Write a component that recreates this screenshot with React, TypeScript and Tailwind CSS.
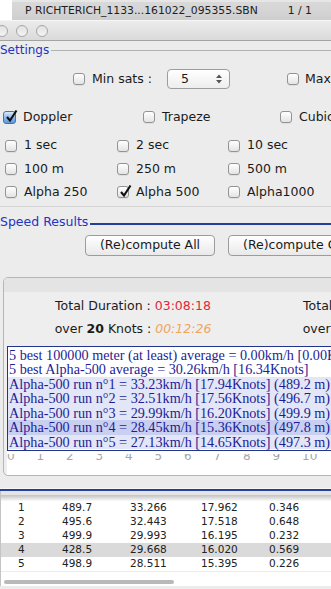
import React from "react";

const SANS = { fontFamily: '"DejaVu Sans", Verdana, sans-serif' };
const SERIF = { fontFamily: '"Liberation Serif", "Times New Roman", serif' };

function Box({ checked, blue }: { checked?: boolean; blue?: boolean }) {
  return (
    <span
      className={
        blue
          ? "relative inline-block w-[13px] h-[13px] shrink-0 rounded-[3px] border border-[#4d71a6] bg-gradient-to-b from-[#dbe9f9] via-[#8cb8ec] to-[#5d98dd]"
          : "relative inline-block w-[12px] h-[12px] shrink-0 rounded-[3px] border border-[#939393] bg-gradient-to-b from-white to-[#e4e4e4] shadow-[0_1px_0_rgba(0,0,0,0.06)]"
      }
    >
      {checked && (
        <svg className="absolute left-[1px] top-[-3px]" width="13" height="14" viewBox="0 0 13 14">
          <path d="M2 8 L5 11.5 L11.5 1.5" fill="none" stroke="#111" strokeWidth="2.1" />
        </svg>
      )}
    </span>
  );
}

function Check({ label, checked, blue, w }: { label: string; checked?: boolean; blue?: boolean; w: string }) {
  return (
    <div className={`flex items-center gap-[7px] shrink-0 ${w}`}>
      <Box checked={checked} blue={blue} />
      <span className="whitespace-nowrap">{label}</span>
    </div>
  );
}

const lines = [
  { t: "5 best 100000 meter (at least) average = 0.00km/h [0.00Knots]", bg: "" },
  { t: "5 best Alpha-500 average = 30.26km/h [16.34Knots]", bg: "" },
  { t: "Alpha-500 run n°1 = 33.23km/h [17.94Knots] (489.2 m)", bg: "bg-[#e2e6f7]" },
  { t: "Alpha-500 run n°2 = 32.51km/h [17.56Knots] (496.7 m)", bg: "bg-[#e2e6f7]" },
  { t: "Alpha-500 run n°3 = 29.99km/h [16.20Knots] (499.9 m)", bg: "bg-[#e2e6f7]" },
  { t: "Alpha-500 run n°4 = 28.45km/h [15.36Knots] (497.8 m)", bg: "bg-[#c9cff1]" },
  { t: "Alpha-500 run n°5 = 27.13km/h [14.65Knots] (497.3 m)", bg: "bg-[#e2e6f7]" },
];

const rows = [
  ["1", "489.7", "33.266", "17.962", "0.346"],
  ["2", "495.6", "32.443", "17.518", "0.648"],
  ["3", "499.9", "29.993", "16.195", "0.232"],
  ["4", "428.5", "29.668", "16.020", "0.569"],
  ["5", "498.9", "28.511", "15.395", "0.226"],
];

export default function App() {
  return (
    <div className="w-[331px] h-[589px] overflow-hidden bg-[#ececec] text-[#1a1a1a] text-[12.5px]" style={SANS}>
      {/* top tab strip */}
      <div className="h-[20px] flex">
        <div className="w-[12px] bg-white" />
        <div className="flex-1 flex flex-col">
          <div className="h-[2px] bg-[#e6e6e6]" />
          <div className="flex-1 flex items-center justify-between pl-[13px] pr-[19px] bg-gradient-to-b from-[#d9d9d9] to-[#cfcfcf] text-[10.8px] text-[#1e1e1e]">
            <span className="whitespace-nowrap">P RICHTERICH_1133...161022_095355.SBN</span>
            <span>1 / 1</span>
          </div>
        </div>
      </div>

      {/* title bar */}
      <div className="h-[21px] flex items-center gap-[8px] bg-gradient-to-b from-[#ececec] to-[#dadada] border-b border-[#a3a3a3] border-t border-t-[#f6f6f6]">
        <span className="ml-[-4px] w-[12px] h-[12px] rounded-full border border-[#a6a6a6] bg-gradient-to-b from-[#e2e2e2] to-[#f4f4f4]" />
        <span className="w-[12px] h-[12px] rounded-full border border-[#a6a6a6] bg-gradient-to-b from-[#e2e2e2] to-[#f4f4f4]" />
        <span className="w-[12px] h-[12px] rounded-full border border-[#a6a6a6] bg-gradient-to-b from-[#e2e2e2] to-[#f4f4f4]" />
      </div>

      {/* settings */}
      <div className="h-[166px] flex flex-col border-b border-[#d4d4d4]">
        <div className="h-[18px] flex items-center">
          <span className="text-[#2333c4] text-[12px]">Settings</span>
          <div className="flex-1 ml-[2px] h-px bg-[#b2b2b2]" />
        </div>
        <div className="mt-[10px] h-[20px] flex items-center pl-[73px] whitespace-nowrap">
          <Box />
          <span className="ml-[7px]">Min sats :</span>
          <div className="ml-[15px] w-[63px] h-[20px] shrink-0 rounded-[4px] border border-[#9d9d9d] bg-gradient-to-b from-white to-[#ededed] flex items-center justify-between pl-[13px] pr-[7px]">
            <span>5</span>
            <svg width="6" height="10" viewBox="0 0 6 10">
              <path d="M0 4 L3 0.5 L6 4 Z" fill="#555" />
              <path d="M0 6 L3 9.5 L6 6 Z" fill="#555" />
            </svg>
          </div>
          <div className="ml-[57px] flex items-center gap-[6px]">
            <Box />
            <span>Max</span>
          </div>
        </div>
        <div className="mt-[18px] h-[20px] flex items-center pl-[3px]">
          <Check label="Doppler" checked blue w="w-[140px]" />
          <Check label="Trapeze" w="w-[137px]" />
          <Check label="Cubic" w="w-[100px]" />
        </div>
        <div className="mt-[7px] flex flex-col pl-[5px]">
          <div className="h-[23.3px] flex items-center">
            <Check label="1 sec" w="w-[112px]" />
            <Check label="2 sec" w="w-[111px]" />
            <Check label="10 sec" w="w-[100px]" />
          </div>
          <div className="h-[23.3px] flex items-center">
            <Check label="100 m" w="w-[112px]" />
            <Check label="250 m" w="w-[111px]" />
            <Check label="500 m" w="w-[100px]" />
          </div>
          <div className="h-[23.3px] flex items-center">
            <Check label="Alpha 250" w="w-[112px]" />
            <Check label="Alpha 500" checked w="w-[111px]" />
            <Check label="Alpha1000" w="w-[100px]" />
          </div>
        </div>
      </div>

      {/* speed results */}
      <div className="flex flex-col">
        <div className="mt-[7px] h-[16px] flex items-center">
          <span className="text-[#2333c4] text-[12.5px] whitespace-nowrap">Speed Results</span>
          <div className="flex-1 ml-[2px] mt-[3px] h-[2px] bg-[#22409c]" />
        </div>
        <div className="mt-[5px] h-[21px] flex pl-[85px] gap-[13px] whitespace-nowrap">
          <div className="w-[130px] shrink-0 rounded-[4px] border border-[#9c9c9c] bg-gradient-to-b from-white to-[#e9e9e9] flex items-center justify-center">
            (Re)compute All
          </div>
          <div className="w-[172px] shrink-0 rounded-[4px] border border-[#9c9c9c] bg-gradient-to-b from-white to-[#e9e9e9] flex items-center pl-[14px]">
            (Re)compute Chosen
          </div>
        </div>

        {/* panel */}
        <div className="mt-[21px] ml-[3px] w-[420px] h-[199px] rounded-[5px] border border-[#b6b6b6] bg-[#eeeeee] flex flex-col overflow-hidden">
          <div className="h-[14px] bg-[#e4e4e4]" />
          <div className="mt-[6px] h-[18px] flex items-center pl-[5px] whitespace-nowrap">
            <div className="w-[248px] shrink-0 text-center">
              Total Duration : <span className="text-[#e1273b]">03:08:18</span>
            </div>
            <div className="w-[248px] shrink-0 text-center">
              Total Duration : <span className="text-[#e1273b]">03:08:18</span>
            </div>
          </div>
          <div className="mt-[5px] h-[18px] flex items-center pl-[5px] whitespace-nowrap">
            <div className="w-[248px] shrink-0 text-center">
              over <b>20</b> Knots : <span className="italic text-[#f0a55c]">00:12:26</span>
            </div>
            <div className="w-[248px] shrink-0 text-center">
              over <b>20</b> Knots : <span className="italic text-[#f0a55c]">00:12:26</span>
            </div>
          </div>
          <div className="mt-[7px] ml-[3px] bg-white flex flex-col">
            <div className="border border-[#23348f] pt-[1px] pb-[1px] text-[14.2px] leading-[14.5px] text-[#1d1d96]" style={SERIF}>
              {lines.map((l, i) => (
                <div key={i} className={`h-[14.5px] whitespace-nowrap pl-[1px] ${l.bg}`}>
                  {l.t}
                </div>
              ))}
            </div>
            <div className="h-[3px]" />
            <div className="h-[8px] overflow-hidden">
              <div className="flex mt-[-5px] text-[12px] leading-[14px] text-[#a6a6a6]">
                {["0", "1", "2", "3", "4", "5", "6", "7", "8", "9", "10", "11"].map((n) => (
                  <span key={n} className="w-[29.5px] shrink-0">
                    {n}
                  </span>
                ))}
              </div>
            </div>
            <div className="h-[13px]" />
          </div>
        </div>

        <div className="h-[13px] border-b border-[#f6f6f6]" />
        <div className="h-[2px] bg-[#23409b]" />
      </div>

      {/* table */}
      <div className="flex h-[95px]">
        <div className="w-[12px] bg-[#eeeeee] border-r border-[#c4c4c4]" />
        <div className="flex-1 flex flex-col bg-white">
          <div className="h-[4px] bg-[#e4e4e4]" />
          <div className="h-[6px] bg-gradient-to-b from-[#c2c2c2] to-[#fafafa]" />
          <div className="flex flex-col text-[10.5px] text-[#222]">
            {rows.map((r, i) => (
              <div key={i} className={`h-[14px] flex items-center whitespace-nowrap ${i === 3 ? "bg-[#dadada]" : ""}`}>
                <span className="w-[56px] shrink-0 pl-[17px]">{r[0]}</span>
                <span className="w-[68px] shrink-0 pl-[5px]">{r[1]}</span>
                <span className="w-[71px] shrink-0 pl-[5px]">{r[2]}</span>
                <span className="w-[68px] shrink-0 pl-[5px]">{r[3]}</span>
                <span className="w-[70px] shrink-0 pl-[5px]">{r[4]}</span>
              </div>
            ))}
          </div>
          <div className="h-px bg-[#ececec]" />
          <div className="mt-[8px] ml-[3px] w-[170px] h-[4px] rounded-full bg-[#b9b9b9]" />
        </div>
      </div>
    </div>
  );
}
